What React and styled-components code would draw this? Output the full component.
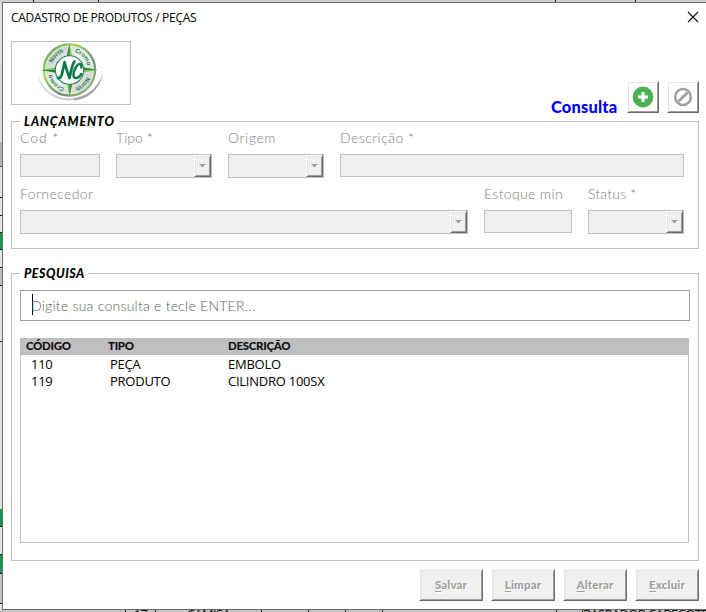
import React from 'react';
import styled, { createGlobalStyle, css } from 'styled-components';

const GlobalStyle = createGlobalStyle`
  *, *::before, *::after { box-sizing: border-box; }
  html, body { margin: 0; padding: 0; overflow: hidden; background: #fff; }
`;

const gothic = "Lato, 'Open Sans', sans-serif";
const system = "'Open Sans', 'Noto Sans', sans-serif";

const Screen = styled.div`
  display: grid;
  grid-template-columns: 2px 1fr;
  grid-template-rows: 2px 608px 2px;
  width: 706px;
  height: 612px;
  overflow: hidden;
  background: #cfcfcf;
`;

const SheetStrip = styled.div`
  grid-column: 1 / -1;
  display: flex;
  height: 2px;
  overflow: hidden;
  background: ${(p) => p.$color};
`;

const SheetCell = styled.div`
  flex: none;
  width: ${(p) => p.$width}px;
  height: 2px;
  border-right: 1px solid #222;
  overflow: hidden;
  text-align: ${(p) => p.$align || 'center'};
  font: 13px/13px ${system};
  letter-spacing: -0.6px;
  color: #111;
  white-space: nowrap;

  span { display: block; margin-top: -2px; }
`;

const SheetMargin = styled.div`
  display: flex;
  flex-direction: column;
  overflow: hidden;
`;

const MarginCell = styled.div`
  flex: none;
  height: ${(p) => p.$height}px;
  background: ${(p) => p.$color};
  border-bottom: 1px solid ${(p) => p.$line || '#1a1a1a'};
`;

const Window = styled.main`
  display: flex;
  flex-direction: column;
  height: 608px;
  padding: 0 7px 0 8px;
  background: #fff;
  border: 1px solid #6b6b6b;
  border-right: 0;
`;

const TitleBar = styled.header`
  display: flex;
  justify-content: space-between;
  flex: none;
  height: 38px;
  padding-top: 5px;
`;

const Title = styled.h1`
  margin: 0;
  font: 400 12px/20px ${system};
  letter-spacing: -0.28px;
  color: #000;
  white-space: nowrap;
`;

const CloseButton = styled.button`
  width: 12px;
  height: 12px;
  margin: 3px 0 0;
  padding: 0;
  border: 0;
  background: none;

  svg { display: block; }
`;

const Banner = styled.div`
  display: flex;
  align-items: flex-end;
  flex: none;
  height: 72px;
  margin-bottom: 1px;
`;

const LogoFrame = styled.div`
  align-self: flex-start;
  width: 120px;
  height: 64px;
  border: 1px solid #bfbfbf;

  svg { display: block; }
`;

const Mode = styled.strong`
  margin-left: auto;
  width: 76px;
  height: 16px;
  font: 900 16.5px/20px ${gothic};
  letter-spacing: 0.15px;
  color: #0000f5;
  white-space: nowrap;
`;

const bevel = css`
  border: 1px solid;
  border-color: #fff #696969 #696969 #fff;
  box-shadow: inset 1px 1px 0 #e3e3e3, inset -1px -1px 0 #a0a0a0;
`;

const IconButton = styled.button`
  ${bevel}
  display: grid;
  place-items: center;
  width: 32px;
  height: 32px;
  padding: 0;
  background: #fff;

  & + & { margin-left: 8px; }
  svg { display: block; }
`;

const Group = styled.fieldset`
  flex: none;
  min-width: 0;
  height: ${(p) => p.$height}px;
  margin: ${(p) => p.$gap || 0}px 0 0;
  padding: 0 8px;
  border: 1px solid #bfbfbf;
`;

const Legend = styled.legend`
  width: ${(p) => p.$width}px;
  height: 15px;
  padding: 0 0 0 4px;
  font: italic 900 12.5px/16px ${gothic};
  letter-spacing: ${(p) => p.$spacing}px;
  color: #000;
  white-space: nowrap;
`;

const FieldRow = styled.div`
  display: flex;
  align-items: flex-start;
  gap: 16px;
  height: 49px;
  margin-bottom: 7px;
`;

const FieldBox = styled.label`
  display: block;
  flex: none;
  width: ${(p) => p.$width}px;
`;

const Caption = styled.span`
  display: block;
  height: 25px;
  font: 300 14px/18px ${gothic};
  letter-spacing: ${(p) => p.$spacing || 0}px;
  color: #808080;
  white-space: nowrap;
`;

const Control = styled.span`
  display: flex;
  justify-content: flex-end;
  height: ${(p) => (p.$combo ? 24 : 23)}px;
  background: #efefef;
  border: 1px solid #bfbfbf;
`;

const DropButton = styled.span`
  ${bevel}
  display: grid;
  place-items: center;
  width: 17px;
  height: 22px;
  background: #efefef;
`;

const SearchBox = styled.div`
  display: flex;
  align-items: center;
  height: 31px;
  margin-top: 9px;
  padding-left: 11px;
  border: 1px solid #a0a0a0;
  font: 300 14px/20px ${gothic};
  letter-spacing: 0.25px;
  color: #5c5c5c;
  white-space: nowrap;
`;

const Caret = styled.i`
  width: 1px;
  height: 21px;
  margin-top: -2px;
  margin-right: -2px;
  background: #000;
`;

const List = styled.div`
  width: 669px;
  height: 205px;
  margin-top: 17px;
  border: 1px solid #bfbfbf;
`;

const ListRow = styled.div`
  display: grid;
  grid-template-columns: 79px 118px 1fr;
  height: 17px;
  padding-left: 10px;
  font: 400 13px/17px ${system};
  letter-spacing: -0.25px;
  color: #000;
`;

const ListHead = styled(ListRow)`
  grid-template-columns: 82px 120px 1fr;
  margin: -1px -1px 1px;
  padding-left: 6px;
  background: #bfbfbf;
  font: 900 11.5px/15px ${gothic};
  letter-spacing: -0.3px;
  color: #111;
`;

const Footer = styled.footer`
  display: flex;
  justify-content: flex-end;
  gap: 8px;
  margin-top: 8px;
`;

const ActionButton = styled.button`
  ${bevel}
  width: 64px;
  height: 32px;
  padding: 0;
  background: #efefef;
  font: 900 11.5px/16px ${gothic};
  letter-spacing: 0.15px;
  color: #a0a0a0;
  text-shadow: 1px 1px 0 #fff;

  u { text-underline-offset: 2px; }
`;

const CloseIcon = () => (
  <svg width="12" height="12" viewBox="0 0 12 12">
    <path d="M1 1L11 11M11 1L1 11" stroke="#111" strokeWidth="1.1" />
  </svg>
);

const AddIcon = () => (
  <svg width="22" height="22" viewBox="0 0 22 22">
    <circle cx="11" cy="11" r="10.4" fill="#4caf50" />
    <path d="M11 6V16M6 11H16" stroke="#fff" strokeWidth="3.2" />
  </svg>
);

const BlockIcon = () => (
  <svg width="20" height="20" viewBox="0 0 20 20">
    <circle cx="10" cy="10" r="7.9" fill="none" stroke="#a0a0a0" strokeWidth="2.5" />
    <path d="M5.5 14.5L14.5 5.5" stroke="#a0a0a0" strokeWidth="3" />
  </svg>
);

const Arrow = () => (
  <svg width="9" height="6" viewBox="0 0 9 6">
    <path d="M2 2H9L5.5 5.5Z" fill="#fff" />
    <path d="M1 1H8L4.5 4.7Z" fill="#a0a0a0" />
  </svg>
);

const Logo = () => (
  <svg width="118" height="62" viewBox="0 0 118 62">
    <defs>
      <linearGradient id="disc" x1="0" y1="0" x2="1" y2="1">
        <stop offset="0" stopColor="#b9bdba" />
        <stop offset="0.5" stopColor="#f3f5f3" />
        <stop offset="1" stopColor="#b9bdba" />
      </linearGradient>
      <linearGradient id="rim" x1="0" y1="0" x2="1" y2="1">
        <stop offset="0" stopColor="#3c8e4b" />
        <stop offset="0.3" stopColor="#a5d65b" />
        <stop offset="0.65" stopColor="#6c8b72" />
        <stop offset="1" stopColor="#a5cf72" />
      </linearGradient>
      <path id="topArc" d="M39 28A18.5 18.5 0 0 1 76 28" />
      <path id="lowArc" d="M76 28A18.5 18.5 0 0 1 39 28" />
    </defs>
    <path d="M26 34C29 50 43 59 59 58.5C75 58 88 47 90.5 32C86 46 75 55 59 56C44 57 32 49 26 34Z" fill="#d4d4d4" />
    <path d="M62 58.3C77 57 88 47 90.5 32C86 46 76 54 62 56.5Z" fill="#a3a3a3" />
    <circle cx="57.5" cy="28" r="25.6" fill="url(#disc)" stroke="url(#rim)" strokeWidth="2.2" />
    <circle cx="57.5" cy="28" r="23.8" fill="none" stroke="#e8ede8" strokeWidth="0.8" />
    <path d="M57.5 1.5L60 14H55ZM57.5 54.5L60 42H55ZM29.5 28L43 25.5V30.5ZM85.5 28L72 25.5V30.5Z" fill="#84c83e" />
    <path d="M57.5 1.5V14H55ZM57.5 54.5V42H60ZM29.5 28H43V30.5ZM85.5 28H72V25.5Z" fill="#238348" />
    <circle cx="57.5" cy="28" r="14.2" fill="#fff" stroke="#278552" strokeWidth="1.1" />
    <g fill="#168449" fontFamily="Liberation Sans" fontSize="6" fontWeight="700">
      <text><textPath href="#topArc" startOffset="7">North</textPath></text>
      <text><textPath href="#topArc" startOffset="34">Cromo</textPath></text>
      <text><textPath href="#lowArc" startOffset="7">North</textPath></text>
      <text><textPath href="#lowArc" startOffset="34">Cromo</textPath></text>
    </g>
    <path d="M46 36C49.5 37 50.5 31 52.5 20C54 26 55.5 31 57.5 36C59 30 59.5 24 62.5 19.3" fill="none" stroke="#0b7a46" strokeWidth="2.7" strokeLinejoin="round" strokeLinecap="round" />
    <path d="M69.3 25.5C70 21 66.5 21 64 25C60.5 31 60.5 36.4 64.5 36C66.5 35.6 68 34.4 69.5 32" fill="none" stroke="#0b7a46" strokeWidth="2.5" strokeLinecap="round" />
  </svg>
);

const Field = ({ label, width, combo, spacing }) => (
  <FieldBox $width={width}>
    <Caption $spacing={spacing}>{label}</Caption>
    <Control $combo={combo}>{combo && <DropButton><Arrow /></DropButton>}</Control>
  </FieldBox>
);

const marginCells = [
  [64, '#dedede', '#d5d5d5'], [42, '#d8d8d8', '#c4c4c4'], [35, '#dddddd', '#b0b0b0'],
  [24, '#b5b5b5', '#217346'], [31, '#e5e5e5'], [18, '#e5e5e5'], [17, '#e5e5e5'],
  [17, '#0c9a4d'], [18, '#e5e5e5'], [18, '#bdbdbd'], [56, '#dedede'], [167, '#dedede', '#dedede'],
  [18, '#0c9a4d'], [28, '#e5e5e5'], [19, '#0c9a4d'], [30, '#c4c4c4'], [10, '#e2e2e2'],
];

const rows = [
  ['110', 'PEÇA', 'EMBOLO'],
  ['119', 'PRODUTO', 'CILINDRO 100SX'],
];

const actions = ['Salvar', 'Limpar', 'Alterar', 'Excluir'];

export default function App() {
  return (
    <>
      <GlobalStyle />
      <Screen>
        <SheetStrip $color="#cfcfcf">
          <SheetCell $width={34} />
          <SheetCell $width={65} />
          <SheetCell $width={457} />
          <SheetCell $width={80} />
        </SheetStrip>
        <SheetMargin>
          {marginCells.map(([height, color, line], i) => (
            <MarginCell key={i} $height={height} $color={color} $line={line} />
          ))}
        </SheetMargin>
        <Window>
          <TitleBar>
            <Title>CADASTRO DE PRODUTOS / PEÇAS</Title>
            <CloseButton aria-label="Fechar"><CloseIcon /></CloseButton>
          </TitleBar>
          <Banner>
            <LogoFrame><Logo /></LogoFrame>
            <Mode>Consulta</Mode>
            <IconButton aria-label="Adicionar"><AddIcon /></IconButton>
            <IconButton aria-label="Cancelar"><BlockIcon /></IconButton>
          </Banner>
          <Group $height={135}>
            <Legend $width={99} $spacing={0.85}>LANÇAMENTO</Legend>
            <FieldRow>
              <Field label="Cod *" width={80} spacing={0.9} />
              <Field label="Tipo *" width={96} spacing={0.05} combo />
              <Field label="Origem" width={96} spacing={0.6} combo />
              <Field label="Descrição *" width={344} spacing={0.45} />
            </FieldRow>
            <FieldRow>
              <Field label="Fornecedor" width={448} spacing={0.4} combo />
              <Field label="Estoque mín" width={88} spacing={0.35} />
              <Field label="Status *" width={96} spacing={0.2} combo />
            </FieldRow>
          </Group>
          <Group $height={295} $gap={17}>
            <Legend $width={69} $spacing={0.5}>PESQUISA</Legend>
            <SearchBox><Caret />Digite sua consulta e tecle ENTER...</SearchBox>
            <List>
              <ListHead><span>CÓDIGO</span><span>TIPO</span><span>DESCRIÇÃO</span></ListHead>
              {rows.map((row) => (
                <ListRow key={row[0]}>{row.map((cell) => <span key={cell}>{cell}</span>)}</ListRow>
              ))}
            </List>
          </Group>
          <Footer>
            {actions.map((label) => (
              <ActionButton key={label}><u>{label[0]}</u>{label.slice(1)}</ActionButton>
            ))}
          </Footer>
        </Window>
        <SheetStrip $color="#c4c4c4">
          <SheetCell $width={126} />
          <SheetCell $width={30}><span>17</span></SheetCell>
          <SheetCell $width={106}><span>CAMISA</span></SheetCell>
          <SheetCell $width={47} />
          <SheetCell $width={37} />
          <SheetCell $width={37} />
          <SheetCell $width={174} />
          <SheetCell $width={26} />
          <SheetCell $width={130} $align="left"><span>RASPADOR CABEÇOTE</span></SheetCell>
        </SheetStrip>
      </Screen>
    </>
  );
}
